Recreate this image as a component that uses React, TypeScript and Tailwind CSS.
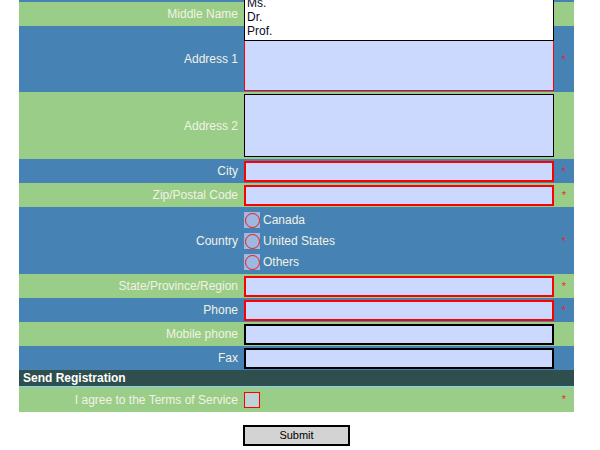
import React from "react";

const BLUE = "bg-[#4682b4]";
const GREEN = "bg-[#9acd88]";

function Label({ text }: { text: string }) {
  return (
    <div className="flex items-center justify-end pr-[6px] text-[12px] text-[#f2f2e4]">
      {text}
    </div>
  );
}

function Star({ show }: { show: boolean }) {
  return (
    <div className="flex items-center justify-center text-[11px] text-[#e8282a]">
      {show ? "*" : ""}
    </div>
  );
}

function InputRow({
  label,
  color,
  required,
  border,
}: {
  label: string;
  color: string;
  required: boolean;
  border: string;
}) {
  return (
    <div className={`grid grid-cols-[225px_310px_20px] h-[24px] ${color}`}>
      <Label text={label} />
      <div className="pt-[2px]">
        <div className={`h-[21px] w-[310px] bg-[#ccd9ff] ${border}`} />
      </div>
      <Star show={required} />
    </div>
  );
}

export default function App() {
  return (
    <div
      className="w-[600px] h-[450px] bg-white overflow-hidden"
      style={{ fontFamily: '"Liberation Sans", Arial, sans-serif' }}
    >
      <div className="ml-[19px] w-[555px] relative">
        <div className={`h-[2px] ${BLUE}`} />
        {/* Middle Name */}
        <div className={`grid grid-cols-[225px_310px_20px] h-[24px] ${GREEN}`}>
          <Label text="Middle Name" />
          <div className="pt-[2px]">
            <div className="h-[21px] w-[310px] bg-[#ccd9ff] border-2 border-black" />
          </div>
          <Star show={false} />
        </div>
        {/* Address 1 */}
        <div className={`grid grid-cols-[225px_310px_20px] h-[66px] ${BLUE}`}>
          <Label text="Address 1" />
          <div className="pt-[2px]">
            <div className="h-[63px] w-[310px] bg-[#ccd9ff] border border-[#ff0000]" />
          </div>
          <Star show={true} />
        </div>
        {/* Address 2 */}
        <div className={`grid grid-cols-[225px_310px_20px] h-[67px] ${GREEN}`}>
          <Label text="Address 2" />
          <div className="pt-[2px]">
            <div className="h-[63px] w-[310px] bg-[#ccd9ff] border border-black" />
          </div>
          <Star show={false} />
        </div>
        <InputRow label="City" color={BLUE} required border="border-2 border-[#ff0000]" />
        <InputRow label="Zip/Postal Code" color={GREEN} required border="border-2 border-[#ff0000]" />
        {/* Country */}
        <div className={`grid grid-cols-[225px_310px_20px] h-[67px] ${BLUE}`}>
          <Label text="Country" />
          <div className="flex flex-col pt-[5px]">
            {["Canada", "United States", "Others"].map((c) => (
              <div key={c} className="h-[21px] flex items-start">
                <div className="flex items-center h-[16px] gap-[3px]">
                  <div className="w-[16px] h-[16px] bg-[#9cb9e2] flex items-center justify-center">
                    <div className="w-[15px] h-[15px] rounded-full border border-[#ff1010]" />
                  </div>
                  <span className="text-[12px] text-[#f2f2e4]">{c}</span>
                </div>
              </div>
            ))}
          </div>
          <Star show={true} />
        </div>
        <InputRow label="State/Province/Region" color={GREEN} required border="border-2 border-[#ff0000]" />
        <InputRow label="Phone" color={BLUE} required border="border-2 border-[#ff0000]" />
        <InputRow label="Mobile phone" color={GREEN} required={false} border="border-2 border-black" />
        <InputRow label="Fax" color={BLUE} required={false} border="border-2 border-black" />
        {/* Header */}
        <div className="h-[16px] bg-[#2f4f4f] flex items-center pl-[4px] text-[12px] font-bold text-white">
          Send Registration
        </div>
        <div className="h-[1px] bg-[#87cefa]" />
        {/* Terms */}
        <div className={`grid grid-cols-[225px_310px_20px] h-[25px] ${GREEN}`}>
          <Label text="I agree to the Terms of Service" />
          <div className="flex items-center">
            <div className="w-[16px] h-[16px] bg-[#bcd4d8] border border-[#ff0000]" />
          </div>
          <Star show={true} />
        </div>

        {/* Title listbox overlay */}
        <div className="absolute left-[225px] top-[-20px] w-[310px] h-[61px] bg-white border border-black pl-[2px] pt-[1px] text-[12px] leading-[14px] text-[#0a0a1e]">
          <div>Mr.</div>
          <div>Ms.</div>
          <div>Dr.</div>
          <div>Prof.</div>
        </div>
      </div>
      <div className="pl-[243px] pt-[13px]">
        <button className="w-[107px] h-[21px] bg-[#d3d3d3] border-2 border-black text-[11px] text-black flex items-center justify-center">
          Submit
        </button>
      </div>
    </div>
  );
}
